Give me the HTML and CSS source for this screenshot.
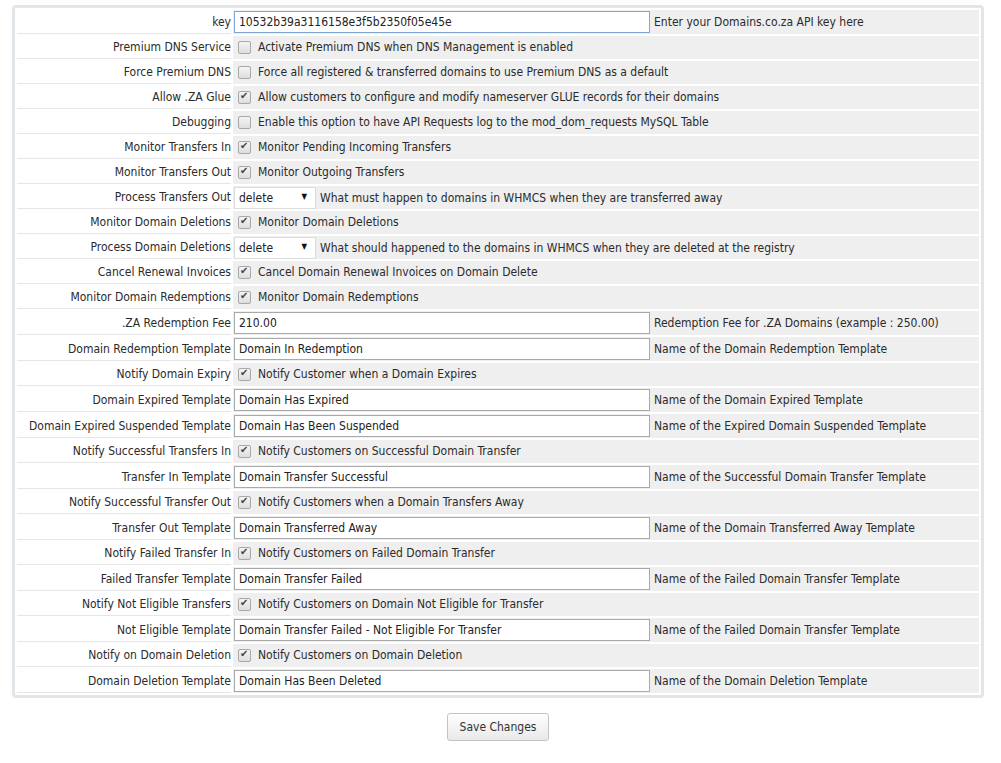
FILE: index.html
```html
<!DOCTYPE html>
<html>
<head>
    <title>Domains.co.za Registrar Settings</title>
    <link rel="stylesheet" href="styles.css">
</head>
<body>
    <form class="settings-form">
        <div class="settings-box">
            <table class="settings">
                <tr>
                    <td class="field-label">key</td>
                    <td class="field-area"><input type="text" class="text-field focused" value="10532b39a3116158e3f5b2350f05e45e"><span class="hint">Enter your Domains.co.za API key here</span></td>
                </tr>
                <tr>
                    <td class="field-label">Premium DNS Service</td>
                    <td class="field-area"><label class="check"><input type="checkbox">Activate Premium DNS when DNS Management is enabled</label></td>
                </tr>
                <tr>
                    <td class="field-label">Force Premium DNS</td>
                    <td class="field-area"><label class="check"><input type="checkbox">Force all registered &amp; transferred domains to use Premium DNS as a default</label></td>
                </tr>
                <tr>
                    <td class="field-label">Allow .ZA Glue</td>
                    <td class="field-area"><label class="check"><input type="checkbox" checked>Allow customers to configure and modify nameserver GLUE records for their domains</label></td>
                </tr>
                <tr>
                    <td class="field-label">Debugging</td>
                    <td class="field-area"><label class="check"><input type="checkbox">Enable this option to have API Requests log to the mod_dom_requests MySQL Table</label></td>
                </tr>
                <tr>
                    <td class="field-label">Monitor Transfers In</td>
                    <td class="field-area"><label class="check"><input type="checkbox" checked>Monitor Pending Incoming Transfers</label></td>
                </tr>
                <tr>
                    <td class="field-label">Monitor Transfers Out</td>
                    <td class="field-area"><label class="check"><input type="checkbox" checked>Monitor Outgoing Transfers</label></td>
                </tr>
                <tr>
                    <td class="field-label">Process Transfers Out</td>
                    <td class="field-area"><span class="select-wrap"><select><option>delete</option><option>cancel</option></select></span><span class="hint">What must happen to domains in WHMCS when they are transferred away</span></td>
                </tr>
                <tr>
                    <td class="field-label">Monitor Domain Deletions</td>
                    <td class="field-area"><label class="check"><input type="checkbox" checked>Monitor Domain Deletions</label></td>
                </tr>
                <tr>
                    <td class="field-label">Process Domain Deletions</td>
                    <td class="field-area"><span class="select-wrap"><select><option>delete</option><option>cancel</option></select></span><span class="hint">What should happened to the domains in WHMCS when they are deleted at the registry</span></td>
                </tr>
                <tr>
                    <td class="field-label">Cancel Renewal Invoices</td>
                    <td class="field-area"><label class="check"><input type="checkbox" checked>Cancel Domain Renewal Invoices on Domain Delete</label></td>
                </tr>
                <tr>
                    <td class="field-label">Monitor Domain Redemptions</td>
                    <td class="field-area"><label class="check"><input type="checkbox" checked>Monitor Domain Redemptions</label></td>
                </tr>
                <tr>
                    <td class="field-label">.ZA Redemption Fee</td>
                    <td class="field-area"><input type="text" class="text-field" value="210.00"><span class="hint">Redemption Fee for .ZA Domains (example : 250.00)</span></td>
                </tr>
                <tr>
                    <td class="field-label">Domain Redemption Template</td>
                    <td class="field-area"><input type="text" class="text-field" value="Domain In Redemption"><span class="hint">Name of the Domain Redemption Template</span></td>
                </tr>
                <tr>
                    <td class="field-label">Notify Domain Expiry</td>
                    <td class="field-area"><label class="check"><input type="checkbox" checked>Notify Customer when a Domain Expires</label></td>
                </tr>
                <tr>
                    <td class="field-label">Domain Expired Template</td>
                    <td class="field-area"><input type="text" class="text-field" value="Domain Has Expired"><span class="hint">Name of the Domain Expired Template</span></td>
                </tr>
                <tr>
                    <td class="field-label">Domain Expired Suspended Template</td>
                    <td class="field-area"><input type="text" class="text-field" value="Domain Has Been Suspended"><span class="hint">Name of the Expired Domain Suspended Template</span></td>
                </tr>
                <tr>
                    <td class="field-label">Notify Successful Transfers In</td>
                    <td class="field-area"><label class="check"><input type="checkbox" checked>Notify Customers on Successful Domain Transfer</label></td>
                </tr>
                <tr>
                    <td class="field-label">Transfer In Template</td>
                    <td class="field-area"><input type="text" class="text-field" value="Domain Transfer Successful"><span class="hint">Name of the Successful Domain Transfer Template</span></td>
                </tr>
                <tr>
                    <td class="field-label">Notify Successful Transfer Out</td>
                    <td class="field-area"><label class="check"><input type="checkbox" checked>Notify Customers when a Domain Transfers Away</label></td>
                </tr>
                <tr>
                    <td class="field-label">Transfer Out Template</td>
                    <td class="field-area"><input type="text" class="text-field" value="Domain Transferred Away"><span class="hint">Name of the Domain Transferred Away Template</span></td>
                </tr>
                <tr>
                    <td class="field-label">Notify Failed Transfer In</td>
                    <td class="field-area"><label class="check"><input type="checkbox" checked>Notify Customers on Failed Domain Transfer</label></td>
                </tr>
                <tr>
                    <td class="field-label">Failed Transfer Template</td>
                    <td class="field-area"><input type="text" class="text-field" value="Domain Transfer Failed"><span class="hint">Name of the Failed Domain Transfer Template</span></td>
                </tr>
                <tr>
                    <td class="field-label">Notify Not Eligible Transfers</td>
                    <td class="field-area"><label class="check"><input type="checkbox" checked>Notify Customers on Domain Not Eligible for Transfer</label></td>
                </tr>
                <tr>
                    <td class="field-label">Not Eligible Template</td>
                    <td class="field-area"><input type="text" class="text-field" value="Domain Transfer Failed - Not Eligible For Transfer"><span class="hint">Name of the Failed Domain Transfer Template</span></td>
                </tr>
                <tr>
                    <td class="field-label">Notify on Domain Deletion</td>
                    <td class="field-area"><label class="check"><input type="checkbox" checked>Notify Customers on Domain Deletion</label></td>
                </tr>
                <tr>
                    <td class="field-label">Domain Deletion Template</td>
                    <td class="field-area"><input type="text" class="text-field" value="Domain Has Been Deleted"><span class="hint">Name of the Domain Deletion Template</span></td>
                </tr>
            </table>
        </div>
        <div class="actions">
            <button type="button" class="save-btn">Save Changes</button>
        </div>
    </form>
</body>
</html>
```

FILE: styles.css
```css
body {
    margin: 0;
    font-family: "DejaVu Sans Condensed", "DejaVu Sans", sans-serif;
    font-size: 12px;
    color: #2b2b2b;
    background: #fff;
}

.settings-form {
    width: 972px;
    margin: 5px 0 0 12px;
}

.settings-box {
    border: 3px solid #e2e6e9;
    border-radius: 4px;
    background: #fff;
}

.settings {
    width: 100%;
    border-collapse: separate;
    border-spacing: 2px;
}

.settings td {
    padding: 0;
    height: 22px;
    line-height: 16px;
}

.field-label {
    width: 211px;
    padding: 0 0 0 3px !important;
    text-align: right;
    border-bottom: 1px solid #e6e6e6;
    white-space: nowrap;
}

.field-area {
    background: #efefef;
    padding-left: 1px !important;
    white-space: nowrap;
}

.text-field {
    width: 416px;
    height: 22px;
    box-sizing: border-box;
    margin: 1px 4px 1px 0;
    padding: 0 4px;
    border: 1px solid #a9a9a9;
    font-family: inherit;
    font-size: 12px;
    color: #222;
    vertical-align: middle;
}

.text-field.focused {
    border-color: #7ea6d6;
}

.hint {
    vertical-align: middle;
}

.check {
    display: inline-flex;
    align-items: center;
    padding-top: 2px;
}

.check input {
    appearance: none;
    -webkit-appearance: none;
    width: 13px;
    height: 13px;
    margin: 0 7px 0 4px;
    border: 1px solid #a8a8a8;
    border-radius: 2px;
    background: linear-gradient(#f4f4f4, #dedede);
    position: relative;
}

.check input:checked::after {
    content: "\2714";
    position: absolute;
    left: 1px;
    top: -2px;
    font-size: 10px;
    color: #444;
}

.select-wrap {
    position: relative;
    display: inline-block;
    margin-right: 4px;
    vertical-align: middle;
}

.select-wrap select {
    appearance: none;
    -webkit-appearance: none;
    display: block;
    width: 82px;
    height: 22px;
    padding: 0 4px;
    border: 1px solid #dcdcdc;
    background: #fff;
    font-family: inherit;
    font-size: 12px;
    color: #222;
}

.select-wrap::after {
    content: "\25BC";
    position: absolute;
    right: 9px;
    top: 5px;
    font-size: 8px;
    line-height: 10px;
    color: #111;
    pointer-events: none;
}

.actions {
    text-align: center;
    margin-top: 15px;
}

.save-btn {
    width: 102px;
    height: 28px;
    border: 1px solid #c4c4c4;
    border-radius: 3px;
    background: linear-gradient(#fefefe, #e9e9e9);
    font-family: inherit;
    font-size: 12px;
    color: #333;
}
```
